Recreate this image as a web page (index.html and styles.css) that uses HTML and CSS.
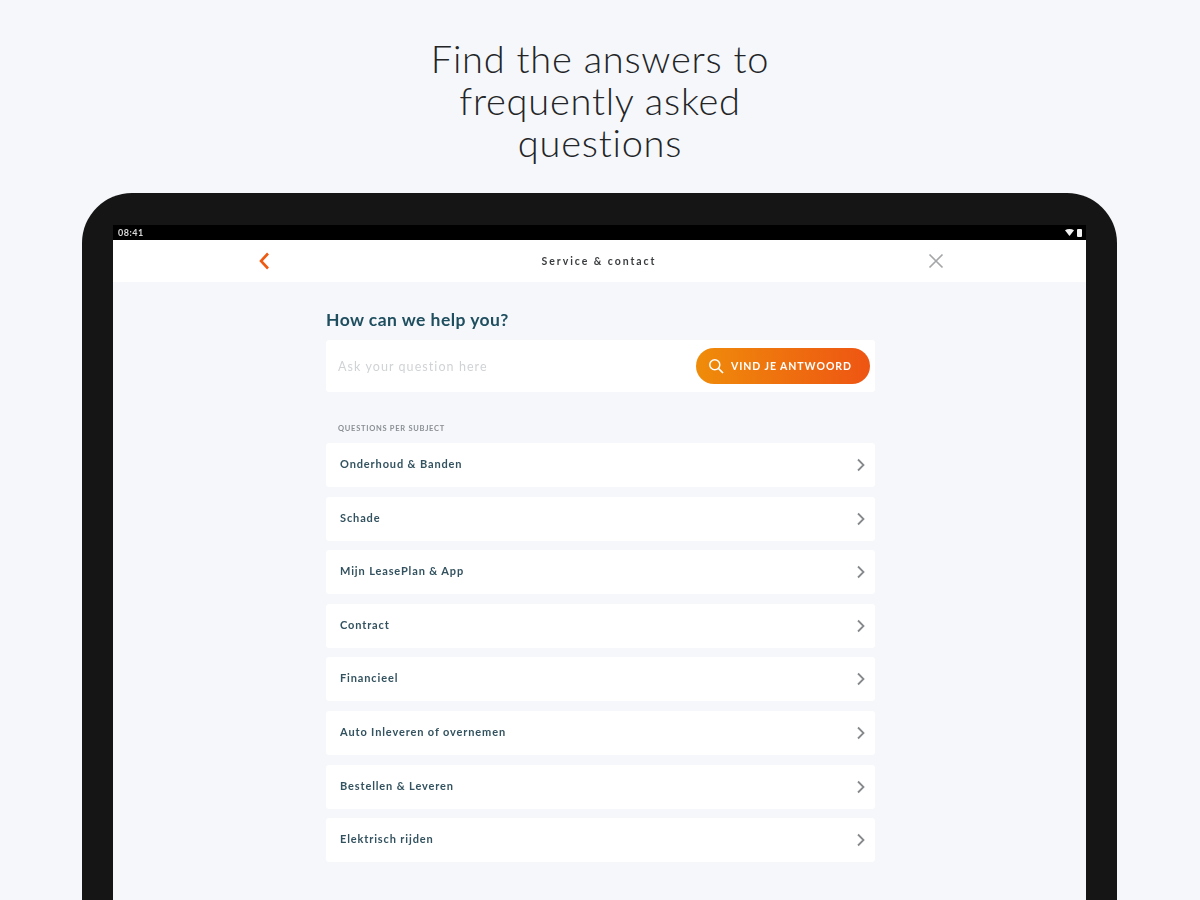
FILE: index.html
```html
<!DOCTYPE html>
<html lang="en">
<head>
<meta charset="utf-8">
<title>Service &amp; contact</title>
<link rel="stylesheet" href="styles.css">
</head>
<body>
<h1 class="headline">Find the answers to<br>frequently asked<br>questions</h1>
<div class="device">
  <div class="screen">
    <div class="status">
      <span class="time">08:41</span>
      <span class="status-icons">
        <svg width="9" height="7" viewBox="0 0 9 7"><path d="M0 1.2C2.6-.4 6.4-.4 9 1.2L4.5 7z" fill="#f2f2f2"/></svg>
        <span class="battery"></span>
      </span>
    </div>
    <div class="appbar">
      <svg class="back" width="14" height="20" viewBox="0 0 14 20"><path d="M11 2.5L4 10l7 7.5" fill="none" stroke="#ee5a12" stroke-width="2.6"/></svg>
      <span class="appbar-title">Service &amp; contact</span>
      <svg class="close" width="18" height="18" viewBox="0 0 18 18"><path d="M2.5 2.5l13 13M15.500 2.500l-13 13" fill="none" stroke="#a4a6a8" stroke-width="1.700"/></svg>
    </div>
    <main class="content">
      <h2 class="help">How can we help you?</h2>
      <div class="search">
        <span class="placeholder">Ask your question here</span>
        <div class="cta">
          <svg width="16" height="16" viewBox="0 0 16 16"><circle cx="6.800" cy="6.800" r="5" fill="none" stroke="#fff" stroke-width="1.500"/><path d="M10.500 10.500L15 15" stroke="#fff" stroke-width="1.700"/></svg>
          <span>VIND JE ANTWOORD</span>
        </div>
      </div>
      <div class="section-label">QUESTIONS PER SUBJECT</div>
      <ul class="list">
        <li class="row"><span class="row-text">Onderhoud &amp; Banden</span><svg class="chev" width="10" height="14" viewBox="0 0 10 14"><path d="M2 1.500L7.500 7 2 12.500" fill="none" stroke="#85898c" stroke-width="1.800"/></svg></li>
        <li class="row"><span class="row-text">Schade</span><svg class="chev" width="10" height="14" viewBox="0 0 10 14"><path d="M2 1.500L7.500 7 2 12.500" fill="none" stroke="#85898c" stroke-width="1.800"/></svg></li>
        <li class="row"><span class="row-text">Mijn LeasePlan &amp; App</span><svg class="chev" width="10" height="14" viewBox="0 0 10 14"><path d="M2 1.500L7.500 7 2 12.500" fill="none" stroke="#85898c" stroke-width="1.800"/></svg></li>
        <li class="row"><span class="row-text">Contract</span><svg class="chev" width="10" height="14" viewBox="0 0 10 14"><path d="M2 1.500L7.500 7 2 12.500" fill="none" stroke="#85898c" stroke-width="1.800"/></svg></li>
        <li class="row"><span class="row-text">Financieel</span><svg class="chev" width="10" height="14" viewBox="0 0 10 14"><path d="M2 1.500L7.500 7 2 12.500" fill="none" stroke="#85898c" stroke-width="1.800"/></svg></li>
        <li class="row"><span class="row-text">Auto Inleveren of overnemen</span><svg class="chev" width="10" height="14" viewBox="0 0 10 14"><path d="M2 1.500L7.500 7 2 12.500" fill="none" stroke="#85898c" stroke-width="1.800"/></svg></li>
        <li class="row"><span class="row-text">Bestellen &amp; Leveren</span><svg class="chev" width="10" height="14" viewBox="0 0 10 14"><path d="M2 1.500L7.500 7 2 12.500" fill="none" stroke="#85898c" stroke-width="1.800"/></svg></li>
        <li class="row"><span class="row-text">Elektrisch rijden</span><svg class="chev" width="10" height="14" viewBox="0 0 10 14"><path d="M2 1.500L7.500 7 2 12.500" fill="none" stroke="#85898c" stroke-width="1.800"/></svg></li>
      </ul>
    </main>
  </div>
</div>
</body>
</html>
```
FILE: styles.css
```css
* { box-sizing: border-box; }
html, body { margin: 0; height: 900px; overflow: hidden; }
body { background: #f5f7fb; font-family: Lato, "Liberation Sans", sans-serif; color: #2b2d2f; }
.headline { margin: 0; padding-top: 37px; height: 193px; text-align: center; font-weight: 300; font-size: 38px; line-height: 42px; letter-spacing: 0.760px; color: #232527; }
.device { width: 1035px; height: 707px; margin-left: 82px; background: #151515; border-radius: 50px 50px 0 0; padding: 32px 31px 0; filter: blur(0.35px); }
.screen { height: 100%; background: #f5f7fb; display: flex; flex-direction: column; overflow: hidden; }
.status { height: 15px; background: #000; display: flex; align-items: center; justify-content: space-between; padding: 0 4px 0 5px; flex: none; }
.time { font-size: 9px; font-weight: 700; color: #d8d8d8; letter-spacing: 0.500px; }
.status-icons { display: flex; align-items: center; gap: 3px; }
.battery { width: 5px; height: 8px; background: #f2f2f2; border-radius: 1px; }
.appbar { height: 42px; flex: none; background: #fff; display: flex; align-items: center; justify-content: space-between; padding: 0 141px 0 144px; }
.appbar-title { font-size: 10.500px; font-weight: 700; letter-spacing: 1.950px; color: #3a3d3f; }
.content { width: 549px; margin-left: 213px; display: flex; flex-direction: column; }
.help { margin: 0; padding-top: 27px; height: 58px; font-size: 17.500px; line-height: 22px; font-weight: 700; color: #1f4e5f; letter-spacing: 0.450px; }
.search { height: 52px; flex: none; background: #fff; border-radius: 3px; display: flex; align-items: center; justify-content: space-between; padding: 0 5px 0 12px; }
.placeholder { font-size: 12.500px; letter-spacing: 1.070px; color: #d0d3d6; }
.cta { width: 174px; height: 36px; border-radius: 18px; background: linear-gradient(90deg, #ef8c0a, #ee5513); display: flex; align-items: center; gap: 7px; padding-left: 12px; color: #fff; font-size: 10.500px; font-weight: 700; letter-spacing: 0.950px; }
.section-label { height: 51px; flex: none; padding: 31px 0 0 12px; font-size: 7.500px; line-height: 12px; font-weight: 700; color: #8a8f94; letter-spacing: 0.730px; }
.list { list-style: none; margin: 0; padding: 0; display: flex; flex-direction: column; gap: 9.600px; }
.row { height: 44px; flex: none; background: #fff; border-radius: 3px; display: flex; align-items: center; justify-content: space-between; padding: 0 9px 0 14px; font-size: 11px; font-weight: 700; letter-spacing: 0.870px; color: #33525f; }
.row-text { margin-bottom: 3px; }
```
